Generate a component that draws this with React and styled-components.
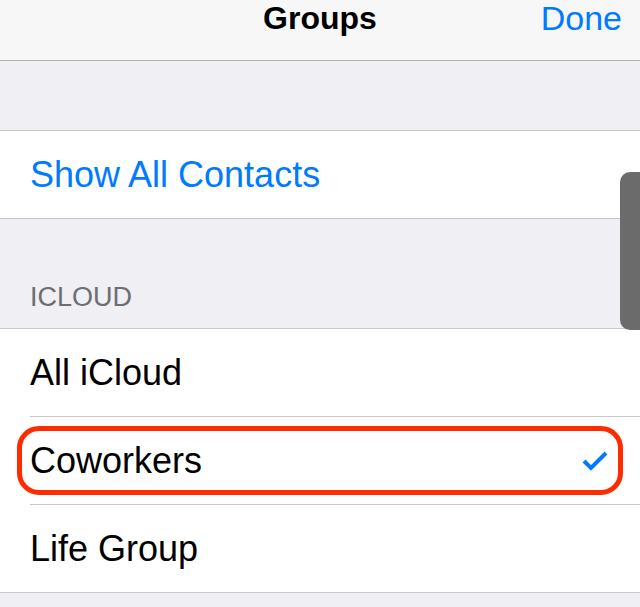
import React from "react";
import styled, { createGlobalStyle } from "styled-components";

const GlobalStyle = createGlobalStyle`
  html, body {
    margin: 0;
    padding: 0;
    background: #efeff4;
  }
  body {
    font-family: "Liberation Sans", Arial, sans-serif;
  }
`;

const Screen = styled.div`
  position: relative;
  width: 640px;
  height: 607px;
  overflow: hidden;
  background: #efeff4;
`;

const NavBar = styled.div`
  display: grid;
  grid-template-columns: 1fr auto 1fr;
  align-items: start;
  height: 61px;
  padding: 0 18px;
  box-sizing: border-box;
  background: #f7f7f7;
  border-bottom: 1px solid #b2b2b2;
`;

const NavTitle = styled.div`
  grid-column: 2;
  font-size: 32px;
  font-weight: bold;
  line-height: 36px;
  color: #000;
`;

const NavButton = styled.div`
  justify-self: end;
  font-size: 34px;
  line-height: 36px;
  color: #007aff;
`;

const Gap = styled.div`
  height: ${(p) => p.h}px;
`;

const Section = styled.div`
  background: #fff;
  border-top: 1px solid #c8c7cc;
  border-bottom: 1px solid #c8c7cc;
`;

const Row = styled.div`
  position: relative;
  display: flex;
  align-items: center;
  justify-content: space-between;
  height: 87px;
  margin-left: 30px;
  padding-right: 32px;
  font-size: 36px;
  color: ${(p) => (p.link ? "#007aff" : "#000")};
  & + & {
    border-top: 1px solid #c8c7cc;
  }
`;

const Header = styled.div`
  display: flex;
  align-items: flex-end;
  height: 109px;
  padding: 0 0 15px 30px;
  box-sizing: border-box;
  font-size: 27px;
  color: #6d6d72;
`;

const Highlight = styled.div`
  position: absolute;
  left: -13px;
  right: 17px;
  top: 9px;
  bottom: 9px;
  border: 5px solid #ff2a00;
  border-radius: 22px;
  pointer-events: none;
`;

const Check = styled.svg`
  width: 26px;
  height: 20px;
`;

const ScrollThumb = styled.div`
  position: absolute;
  left: 620px;
  top: 172px;
  width: 30px;
  height: 158px;
  border-radius: 10px;
  background: #6b6b6b;
`;

const groups = [
  { name: "All iCloud" },
  { name: "Coworkers", selected: true },
  { name: "Life Group" },
];

export default function App() {
  return (
    <Screen>
      <GlobalStyle />
      <NavBar>
        <NavTitle>Groups</NavTitle>
        <NavButton>Done</NavButton>
      </NavBar>
      <Gap h={69} />
      <Section>
        <Row link>Show All Contacts</Row>
      </Section>
      <Header>ICLOUD</Header>
      <Section>
        {groups.map((g) => (
          <Row key={g.name}>
            {g.name}
            {g.selected && (
              <>
                <Check viewBox="0 0 26 20">
                  <path
                    d="M2 10 L9 17 L24 2"
                    fill="none"
                    stroke="#007aff"
                    strokeWidth="4"
                  />
                </Check>
                <Highlight />
              </>
            )}
          </Row>
        ))}
      </Section>
      <ScrollThumb />
    </Screen>
  );
}
